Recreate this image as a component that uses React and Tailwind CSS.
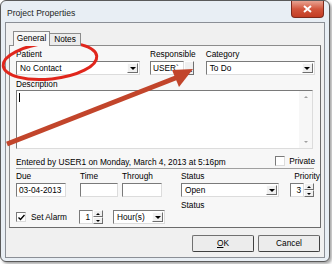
import React from 'react';

// sunken classic 3d box (text boxes, combos)
const sunken = 'bg-white border border-t-[#7a7a7a] border-l-[#7a7a7a] border-b-[#dcdcdc] border-r-[#dcdcdc]';
const raised = 'bg-[#f0f0f0] border border-t-[#fdfdfd] border-l-[#fdfdfd] border-b-[#6f6f6f] border-r-[#6f6f6f]';

const DownTri = () => (
  <div className="w-0 h-0 border-l-[3px] border-r-[3px] border-t-[3px] border-l-transparent border-r-transparent border-t-black" />
);

const Combo = ({ value, className }) => (
  <div className={`${sunken} ${className} h-[14px] shrink-0 flex items-stretch p-[1px]`}>
    <div className="flex-1 flex items-center pl-[2px] text-black">{value}</div>
    <div className={`${raised} w-[11px] flex items-center justify-center`}>
      <DownTri />
    </div>
  </div>
);

const TextBox = ({ value, className }) => (
  <div className={`${sunken} ${className} h-[14px] shrink-0 flex items-center pl-[2px]`}>{value}</div>
);

const Spin = ({ value }) => (
  <div className="flex h-[14px] shrink-0">
    <div className={`${sunken} w-[14px] flex items-center justify-end pr-[2px]`}>{value}</div>
    <div className="flex flex-col w-[10px]">
      <div className={`${raised} flex-1 flex items-center justify-center`}>
        <div className="w-0 h-0 border-l-[2px] border-r-[2px] border-b-[2px] border-l-transparent border-r-transparent border-b-black" />
      </div>
      <div className={`${raised} flex-1 flex items-center justify-center`}>
        <div className="w-0 h-0 border-l-[2px] border-r-[2px] border-t-[2px] border-l-transparent border-r-transparent border-t-black" />
      </div>
    </div>
  </div>
);

const Check = ({ checked }) => (
  <div className={`${sunken} w-[10px] h-[10px] shrink-0 flex items-center justify-center`}>
    {checked && (
      <svg width="7" height="7" viewBox="0 0 7 7">
        <path d="M0.5 3.5 L2.5 5.5 L6.5 1" stroke="#000" strokeWidth="1.4" fill="none" />
      </svg>
    )}
  </div>
);

const Label = ({ children, className = '' }) => (
  <div className={`h-[9px] leading-[9px] mb-[2px] shrink-0 whitespace-nowrap ${className}`}>{children}</div>
);

const Button = ({ children }) => (
  <div className="w-[62px] h-[17px] flex items-center justify-center border border-[#707070] border-b-[#404040] border-r-[#404040] rounded-[2px] bg-[#ececec]">
    {children}
  </div>
);

const Annotations = () => (
  <svg className="absolute inset-0 pointer-events-none" width="332" height="264" viewBox="0 0 332 264">
    <ellipse cx="50" cy="61" rx="47" ry="18" transform="rotate(-6 50 61)" fill="none" stroke="#e0261c" strokeWidth="3" />
    <line x1="7" y1="144" x2="178" y2="77" stroke="#c2452b" strokeWidth="5" />
    <polygon points="193,69 172,70 179,87" fill="#c2452b" />
  </svg>
);

export default function App() {
  return (
    <div className="relative w-[332px] h-[264px] bg-white font-['Liberation_Sans',Arial,sans-serif] text-[8.3px] text-black">
      {/* window frame */}
      <div className="w-[330px] h-[262px] flex flex-col rounded-[6px] border border-[#5a5a5a] bg-[#e8eef4] px-[4px] pb-[3px] shadow-[2px_2px_3px_rgba(0,0,0,0.35)]">
        {/* title bar */}
        <div className="h-[21px] shrink-0 flex items-start justify-between">
          <div className="pl-[2px] pt-[6px] text-[8.6px] text-[#1e1e1e]">Project Properties</div>
          <div className="w-[33px] h-[17px] mr-[1px] rounded-b-[4px] border border-t-0 border-[#7d2a1c] bg-gradient-to-b from-[#e7a291] via-[#d2553c] to-[#c33d24] flex items-center justify-center">
            <svg width="9" height="8" viewBox="0 0 9 8">
              <path d="M1 1 L8 7 M8 1 L1 7" stroke="#fff" strokeWidth="2" />
            </svg>
          </div>
        </div>

        {/* client area */}
        <div className="flex-1 flex flex-col bg-[#f0f0f0] border border-[#8b8f96] pl-[3px] pt-[8px]">
          {/* tabs */}
          <div className="flex items-end ml-[4px] -mb-[1px] relative z-10 shrink-0">
            <div className="w-[37px] h-[15px] bg-[#f7f7f7] border border-[#8c8c8c] border-b-0 flex items-center justify-center pb-[1px]">General</div>
            <div className="w-[31px] h-[13px] bg-[#ececec] border border-[#8c8c8c] border-l-0 border-b-[#8c8c8c] flex items-center justify-center">Notes</div>
          </div>

          {/* tab panel */}
          <div className="w-[312px] h-[183px] shrink-0 bg-[#f7f7f7] border border-[#8c8c8c] border-b-[#6b6b6b] border-r-[#6b6b6b] pl-[6px] pt-[4px] flex flex-col">
            {/* first row */}
            <div className="flex shrink-0">
              <div className="flex flex-col w-[124px]">
                <Label>Patient</Label>
                <Combo value="No Contact" className="w-[124px]" />
              </div>
              <div className="flex flex-col ml-[10px]">
                <Label>Responsible</Label>
                <div className="flex">
                  <TextBox value="USER`" className="w-[34px]" />
                  <div className={`${raised} w-[10px] h-[14px] flex items-end justify-center leading-[9px]`}>...</div>
                </div>
              </div>
              <div className="flex flex-col ml-[10px]">
                <Label>Category</Label>
                <Combo value="To Do" className="w-[109px]" />
              </div>
            </div>

            {/* description */}
            <Label className="mt-[5px] !mb-[1px]">Description</Label>
            <div className={`${sunken} w-[297px] h-[59px] shrink-0 flex`}>
              <div className="flex-1 pl-[2px] pt-[2px]">
                <div className="w-px h-[9px] bg-black" />
              </div>
              <div className="w-[13px] bg-[#f7f7f7] flex flex-col items-center justify-between py-[5px]">
                <div className="w-0 h-0 border-l-[2px] border-r-[2px] border-b-[2px] border-l-transparent border-r-transparent border-b-[#a0a0a0]" />
                <div className="w-0 h-0 border-l-[2px] border-r-[2px] border-t-[2px] border-l-transparent border-r-transparent border-t-[#a0a0a0]" />
              </div>
            </div>

            {/* entered by */}
            <div className="w-[299px] shrink-0 flex items-center justify-between mt-[8px] h-[10px]">
              <div>Entered by USER1 on Monday, March 4, 2013 at 5:16pm</div>
              <div className="flex items-center gap-[4px] -mt-[2px]">
                <Check />
                <span>Private</span>
              </div>
            </div>
            <div className="w-[298px] h-px shrink-0 bg-[#a0a0a0] mt-[1px]" />

            {/* due row */}
            <div className="flex shrink-0 mt-[3px]">
              <div className="flex flex-col">
                <Label>Due</Label>
                <TextBox value="03-04-2013" className="w-[50px]" />
              </div>
              <div className="flex flex-col ml-[14px]">
                <Label>Time</Label>
                <TextBox value="" className="w-[38px]" />
              </div>
              <div className="flex flex-col ml-[4px]">
                <Label>Through</Label>
                <TextBox value="" className="w-[40px]" />
              </div>
              <div className="flex flex-col ml-[19px]">
                <Label>Status</Label>
                <Combo value="Open" className="w-[98px]" />
              </div>
              <div className="flex flex-col items-end ml-[10px] w-[25px]">
                <Label className="-mr-[6px]">Priority</Label>
                <Spin value="3" />
              </div>
            </div>

            {/* alarm row */}
            <div className="flex shrink-0 items-start mt-[4px]">
              <div className="flex items-center mt-[9px] whitespace-nowrap">
                <Check checked />
                <span className="ml-[5px] w-[35px]">Set Alarm</span>
                <div className="ml-[13px]">
                  <Spin value="1" />
                </div>
                <Combo value="Hour(s)" className="w-[52px] ml-[10px]" />
              </div>
              <div className="ml-[16px] h-[9px] leading-[9px]">Status</div>
            </div>
          </div>

          {/* buttons */}
          <div className="flex shrink-0 justify-end gap-[4px] mt-[7px] mr-[4px]">
            <Button><span className="underline">O</span>K</Button>
            <Button>Cancel</Button>
          </div>
        </div>
      </div>
      <Annotations />
    </div>
  );
}
